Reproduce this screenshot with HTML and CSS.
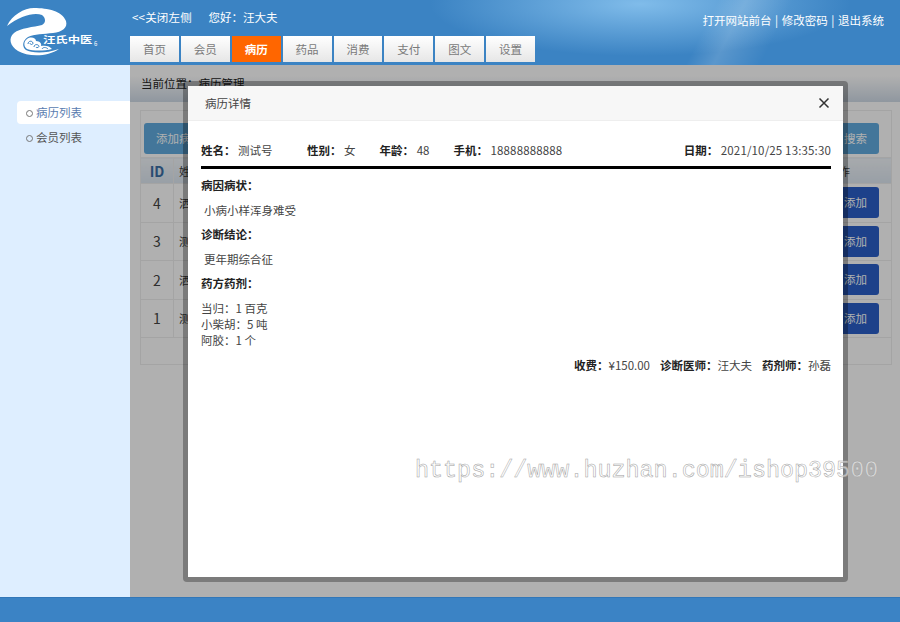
FILE: index.html
```html
<!DOCTYPE html>
<html lang="zh-CN">
<head>
    <meta charset="UTF-8">
    <meta name="viewport" content="width=device-width, initial-scale=1.0">
    <title>病历管理</title>
    <link rel="stylesheet" href="styles.css">
</head>
<body>
    <header class="top">
        <div class="logo">
            <svg width="130" height="65" viewBox="0 0 130 65">
                <path fill="#fff" d="M7 26C12 15 24 8 34 8C48 8 62 11 66 21C68 28 62 32 53 33C44 34 34 34 28 37C22 41 22 47 26 50C31 53 45 54 59 49C48 57 28 57 18 51C10 46 8 38 14 33C20 28 34 27 42 25C46 23 46 18 42 15C34 12 20 16 7 26Z"/>
                <path fill="#fff" d="M27 39C31 36 36 38 36 41C40 41 42 44 41 46C45 45 50 46 52 49C44 51 33 51 27 49C23 46 24 41 27 39Z"/>
                <g fill="none" stroke="#3b83c3" stroke-width="1">
                    <path d="M28 44C28 41 32 40 33 43C33 45 30 45 30 43"/>
                    <path d="M34 47C34 44 38 44 39 46C39 48 36 48 36 47"/>
                    <path d="M42 49C43 47 46 47 48 49"/>
                </g>
                <text class="logo-name" transform="translate(43 43) scale(1.03 .75)">汪氏中医</text>
                <text class="logo-mark" x="94" y="46">6</text>
            </svg>
        </div>
        <div class="top-mid">
            <div class="hello">
                <a>&lt;&lt;关闭左侧</a>
                <span>您好：汪大夫</span>
            </div>
            <nav class="tabs">
                <a>首页</a>
                <a>会员</a>
                <a class="on">病历</a>
                <a>药品</a>
                <a>消费</a>
                <a>支付</a>
                <a>图文</a>
                <a>设置</a>
            </nav>
        </div>
        <div class="top-links">打开网站前台 | 修改密码 | 退出系统</div>
    </header>

    <div class="middle">
        <aside class="side">
            <a class="side-item on">病历列表</a>
            <a class="side-item">会员列表</a>
        </aside>

        <main class="main">
            <div class="crumb">当前位置：病历管理</div>
            <div class="panel">
                <div class="toolbar">
                    <a class="btn btn-light">添加病历</a>
                    <a class="btn btn-light">搜索</a>
                </div>
                <table class="list">
                    <tr><th class="col-id">ID</th><th>姓名</th><th class="col-op">操作</th></tr>
                    <tr><td>4</td><td>洒</td><td class="col-op"><a class="btn btn-dark">添加</a></td></tr>
                    <tr><td>3</td><td>测</td><td class="col-op"><a class="btn btn-dark">添加</a></td></tr>
                    <tr><td>2</td><td>洒</td><td class="col-op"><a class="btn btn-dark">添加</a></td></tr>
                    <tr><td>1</td><td>测</td><td class="col-op"><a class="btn btn-dark">添加</a></td></tr>
                    <tr class="pager"><td colspan="3"></td></tr>
                </table>
            </div>

            <div class="mask">
                <div class="modal">
                    <div class="modal-head">
                        <span>病历详情</span>
                        <svg width="12" height="12" viewBox="0 0 12 12">
                            <path d="M1.5 1.5L10.5 10.5M10.5 1.5L1.5 10.5" stroke="#333" stroke-width="1.5" fill="none"/>
                        </svg>
                    </div>
                    <div class="modal-body">
                        <div class="info">
                            <span class="info-name"><b>姓名：</b> 测试号</span>
                            <span><b>性别：</b> 女</span>
                            <span><b>年龄：</b> 48</span>
                            <span><b>手机：</b> <em>18888888888</em></span>
                            <span class="info-date"><b>日期：</b> <em>2021/10/25 13:35:30</em></span>
                        </div>
                        <h4>病因病状：</h4>
                        <p class="note">小病小样浑身难受</p>
                        <h4>诊断结论：</h4>
                        <p class="note">更年期综合征</p>
                        <h4>药方药剂：</h4>
                        <ul class="drugs">
                            <li>当归：1 百克</li>
                            <li>小柴胡：5 吨</li>
                            <li>阿胶：1 个</li>
                        </ul>
                        <div class="summary">
                            <span><b>收费：</b>¥150.00</span>
                            <span><b>诊断医师：</b>汪大夫</span>
                            <span><b>药剂师：</b>孙磊</span>
                        </div>
                    </div>
                </div>
            </div>
        </main>
    </div>

    <footer class="bottom"></footer>
    <div class="watermark">https://www.huzhan.com/ishop39500</div>
</body>
</html>
```

FILE: styles.css
```css
* { box-sizing: border-box; }
html, body { height: 100%; }
body { margin: 0; display: flex; flex-direction: column; overflow: hidden; font-family: "Noto Sans CJK SC", "Noto Sans", sans-serif; font-size: 11.5px; line-height: 16px; color: #444; }
a { color: inherit; text-decoration: none; }
b { color: #222; }
em { font-style: normal; letter-spacing: 0.15px; }

.top { height: 65px; display: flex; color: #fff; background: linear-gradient(117deg, rgba(255, 255, 255, 0) 77%, rgba(255, 255, 255, 0.16) 80%, rgba(255, 255, 255, 0) 85%), radial-gradient(ellipse 210px 52px at 640px 4px, #80bcea 0%, rgba(128, 188, 234, 0) 100%), #3b83c3; }
.logo { width: 130px; flex: none; }
.logo svg { display: block; }
.logo-name { font-size: 12px; font-weight: 700; fill: #fff; }
.logo-mark { font-size: 6px; fill: #fff; }
.top-mid { padding-top: 9px; }
.hello { height: 27px; padding-left: 2px; }
.hello a { letter-spacing: 0.2px; }
.hello span { margin-left: 14px; }
.tabs { display: flex; gap: 2px; }
.tabs a { width: 48.875px; height: 26px; line-height: 26px; text-align: center; color: #7a7a7a; background: linear-gradient(180deg, #fff 0%, #e6e6e6 100%); }
.tabs a.on { color: #fff; font-weight: 700; background: #ff6600; }
.top-links { margin-left: auto; padding: 12px 16px 0 0; word-spacing: 1px; }

.middle { flex: 1; display: flex; min-height: 0; }
.side { width: 130px; flex: none; padding-top: 36px; background: #deeeff; }
.side-item { display: block; height: 23px; line-height: 23px; margin: 0 0 2px 17px; padding-left: 19px; color: #555; position: relative; }
.side-item::before { content: ""; position: absolute; left: 9px; top: 9px; width: 5px; height: 5px; border: 1px solid #777; border-radius: 50%; }
.side-item.on { background: #fff; color: #5a7cb0; border-radius: 4px 0 0 4px; }

.main { flex: 1; position: relative; min-width: 0; }
.crumb { height: 37px; padding: 10px 0 0 11px; color: #222; background: linear-gradient(180deg, #fff 0%, #fff 30%, #d0dbe7 100%); }
.panel { margin: 8px 8px 0 10px; }
.toolbar { height: 47px; padding: 12px 12px 0 3px; display: flex; justify-content: space-between; border: 1px solid #eee; border-bottom: 0; }
.btn { display: inline-block; height: 31px; line-height: 31px; padding: 0 12px; border-radius: 3px; color: #fff; }
.btn-light { background: #62acdf; }
.btn-dark { background: #2a5fc8; }
.list { width: 100%; border-collapse: collapse; }
.list th, .list td { border: 1px solid #eee; padding: 0 5px; font-weight: 400; text-align: left; height: 38.5px; }
.list th { height: 26px; background: linear-gradient(180deg, #f2f6fa 0%, #dde7f1 100%); }
.list th.col-id { width: 33px; text-align: center; font-size: 14px; font-weight: 700; color: #3a6ea5; }
.list td:first-child { text-align: center; font-size: 14px; }
.list .col-op { width: 120px; text-align: right; padding-right: 12px; }
.list th.col-op { padding-right: 41px; }
.list .pager td { height: 27px; }

.mask { position: absolute; inset: 0; padding: 16px 0 0 53px; background: rgba(0, 0, 0, 0.31); }
.modal { width: 665px; height: 501px; display: flex; flex-direction: column; background: #fff; background-clip: padding-box; border: 5px solid rgba(0, 0, 0, 0.3); border-radius: 4px; }
.modal-head { height: 35px; flex: none; display: flex; align-items: center; justify-content: space-between; padding: 0 13px 0 17px; background: #f7f7f7; border-bottom: 1px solid #eee; }
.modal-body { padding: 21px 12px 0 13px; }
.info { display: flex; gap: 24px; padding-bottom: 8px; border-bottom: 3px solid #000; }
.info-name { min-width: 82px; }
.info-date { margin-left: auto; }
.modal-body h4 { margin: 8px 0 9px; font-size: 11.5px; line-height: 16px; color: #222; }
.note { margin: 0; padding-left: 3px; }
.drugs { margin: 0; padding: 0; list-style: none; }
.summary { margin-top: 9px; display: flex; justify-content: flex-end; gap: 10px; }

.bottom { height: 25px; flex: none; background: #3b83c5; border-top: 1px solid #3277b8; }
.watermark { position: absolute; left: 415px; top: 457px; font-family: "Liberation Mono", monospace; font-size: 23.4px; line-height: 28px; white-space: nowrap; color: rgba(255, 255, 255, 0.55); -webkit-text-stroke: 0.5px #a0a0a0; }
```
